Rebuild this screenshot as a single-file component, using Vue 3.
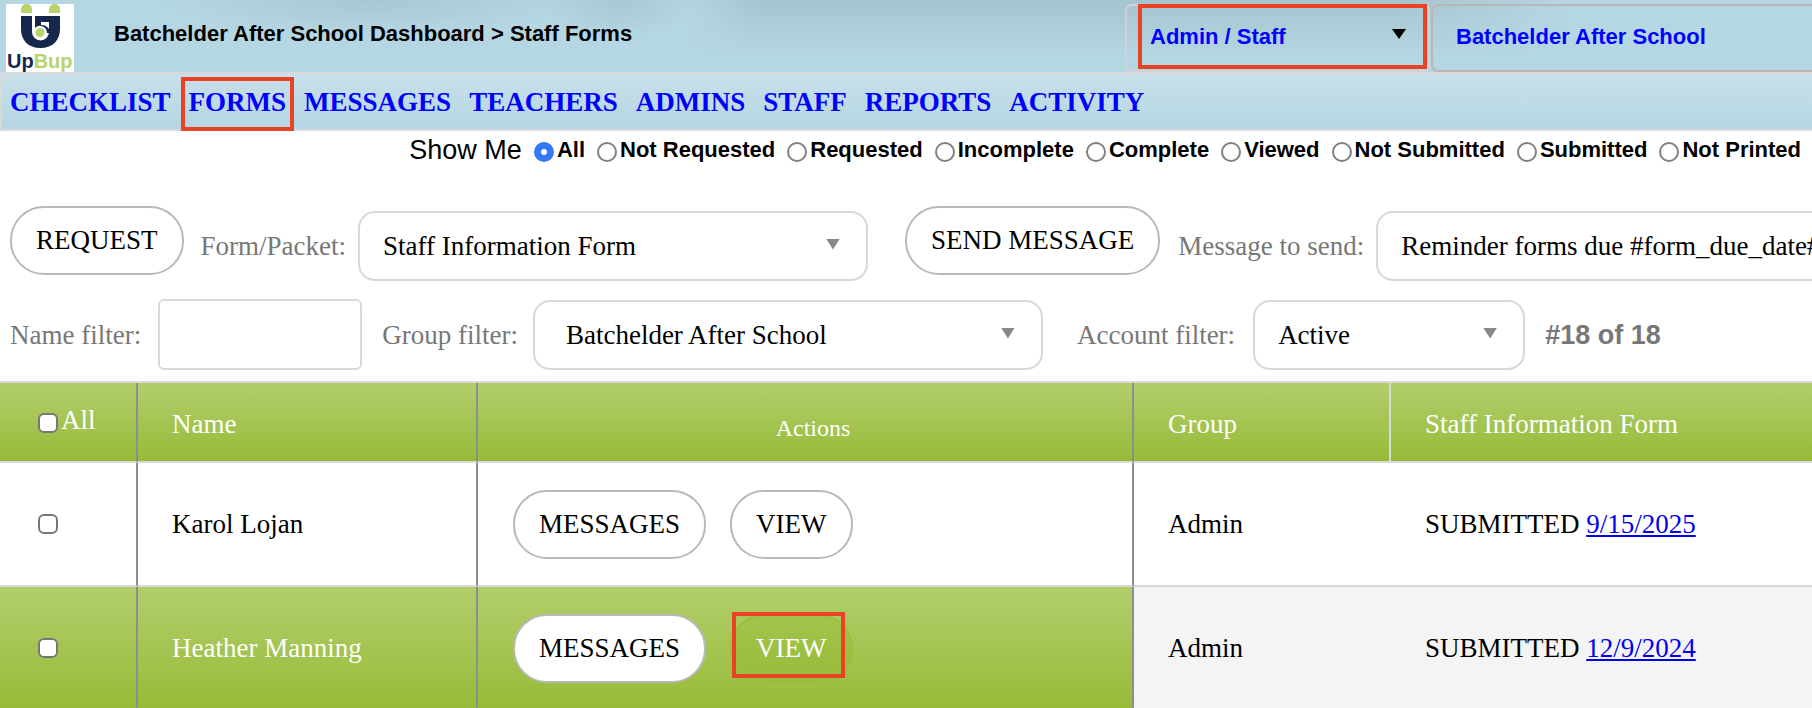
<template>
  <div class="page">
    <header class="topbar">
      <a class="logo" href="#" aria-label="UpBup">
        <svg viewBox="0 0 68 68" width="68" height="68" aria-hidden="true">
          <rect width="68" height="68" fill="#fff" />
          <path d="M15 9V5a5.500 5 0 0 1 11 0v4zM43 9V5a5.500 5 0 0 1 11 0v4z" fill="#b9d36c" />
          <path d="M15 12h11v16a8.500 8.500 0 0 0 17 0V12h11v13c0 11-7 19-19.500 19S15 36 15 25z" fill="#15284b" />
          <path d="M29 12h15v6h-9v3c5 0 9 3 9 8h-3a7 7 0 0 0-12-5z" fill="#15284b" />
          <circle cx="34" cy="28.500" r="4.500" fill="#b9d36c" />
          <text x="1" y="64" class="logo-text" fill="#15284b">Up<tspan fill="#b9d36c">Bup</tspan></text>
        </svg>
      </a>
      <h1 class="title">Batchelder After School Dashboard &gt; Staff Forms</h1>
      <div class="role-select marked">
        <select v-model="role" aria-label="Role">
          <option>Admin / Staff</option>
        </select>
      </div>
      <select v-model="school" class="school-select" aria-label="School">
        <option>Batchelder After School</option>
      </select>
    </header>

    <nav class="nav">
      <a v-for="item in navItems" :key="item" href="#" :class="{ marked: item === 'FORMS' }">{{ item }}</a>
    </nav>

    <fieldset class="show-me">
      <span class="show-title">Show Me</span>
      <label v-for="s in statuses" :key="s">
        <input v-model="status" type="radio" name="status" :value="s" />{{ s }}
      </label>
    </fieldset>

    <div class="toolbar">
      <button type="button" class="pill">REQUEST</button>
      <label for="packet" class="packet-label">Form/Packet:</label>
      <div class="select wide">
        <select id="packet" v-model="packet">
          <option>Staff Information Form</option>
        </select>
      </div>
      <button type="button" class="pill send">SEND MESSAGE</button>
      <label for="message" class="message-label">Message to send:</label>
      <div class="select wide">
        <select id="message" v-model="message">
          <option>Reminder forms due #form_due_date#</option>
        </select>
      </div>
    </div>

    <div class="toolbar filters">
      <label for="name">Name filter:</label>
      <input id="name" v-model="nameFilter" type="text" class="name-input" />
      <label for="group">Group filter:</label>
      <div class="select wide group">
        <select id="group" v-model="group">
          <option>Batchelder After School</option>
        </select>
      </div>
      <label for="account" class="account-label">Account filter:</label>
      <div class="select account">
        <select id="account" v-model="account">
          <option>Active</option>
        </select>
      </div>
      <strong class="count">#18 of 18</strong>
    </div>

    <table class="staff">
      <colgroup>
        <col class="col-check" />
        <col class="col-name" />
        <col class="col-actions" />
        <col class="col-group" />
        <col />
      </colgroup>
      <thead>
        <tr>
          <th class="line check"><label><input v-model="all" type="checkbox" />All</label></th>
          <th class="line">Name</th>
          <th class="line actions-head">Actions</th>
          <th class="line light">Group</th>
          <th>Staff Information Form</th>
        </tr>
      </thead>
      <tbody>
        <tr v-for="row in rows" :key="row.name" :class="{ active: row.active }">
          <td class="line check"><input v-model="row.checked" type="checkbox" :aria-label="row.name" /></td>
          <td class="line">{{ row.name }}</td>
          <td class="line">
            <div class="actions">
              <button type="button" class="pill">MESSAGES</button>
              <button type="button" class="pill view" :class="{ marked: row.active }">VIEW</button>
            </div>
          </td>
          <td class="plain">{{ row.group }}</td>
          <td class="plain">SUBMITTED <a href="#">{{ row.date }}</a></td>
        </tr>
      </tbody>
    </table>
  </div>
</template>

<script setup>
import { ref } from 'vue';

const navItems = ['CHECKLIST', 'FORMS', 'MESSAGES', 'TEACHERS', 'ADMINS', 'STAFF', 'REPORTS', 'ACTIVITY'];
const statuses = [
  'All', 'Not Requested', 'Requested', 'Incomplete', 'Complete',
  'Viewed', 'Not Submitted', 'Submitted', 'Not Printed',
];

const role = ref('Admin / Staff');
const school = ref('Batchelder After School');
const status = ref('All');
const packet = ref('Staff Information Form');
const message = ref('Reminder forms due #form_due_date#');
const nameFilter = ref('');
const group = ref('Batchelder After School');
const account = ref('Active');
const all = ref(false);

const rows = ref([
  { name: 'Karol Lojan', group: 'Admin', date: '9/15/2025', checked: false, active: false },
  { name: 'Heather Manning', group: 'Admin', date: '12/9/2024', checked: false, active: true },
]);
</script>

<style>
body { margin: 0; overflow: hidden; background: #fff; }
</style>

<style scoped>
.page { overflow: hidden; color: #000; font: 27px/32px "Liberation Serif", "Times New Roman", serif; white-space: nowrap; }
.page * { box-sizing: border-box; }
select, input, button { margin: 0; font: inherit; color: inherit; }
select { appearance: none; background: transparent; cursor: pointer; }

/* top bar */
.topbar {
  display: flex; height: 72px; padding-left: 6px;
  font: bold 22px/26px "Liberation Sans", Arial, sans-serif;
  background:
    radial-gradient(ellipse 220px 36px at 370px 0, #a8c7d2, transparent),
    radial-gradient(ellipse 80px 40px at 620px 0, #a8c7d2, transparent),
    linear-gradient(90deg, #b5d7e3 680px, transparent 760px, transparent 1400px, #b5d7e3 1580px),
    linear-gradient(#a6c4cf, #b5d7e3 60px);
}
.logo { flex: none; height: 68px; margin-top: 4px; }
.logo svg { display: block; }
.logo-text { font: bold 20px "Liberation Sans", Arial, sans-serif; }
.title { flex: 1; margin: 21px 0 0 40px; font: inherit; }
.role-select { position: relative; flex: none; width: 305px; height: 68px; margin: 4px 1px 0 0; }
.role-select select, .school-select { border: 2px solid #cfd3d5; border-radius: 7px; color: #00f; padding: 0 23px 2px; }
.role-select select { width: 100%; height: 100%; }
.role-select::before {
  content: ""; position: absolute; right: 24px; top: 25px; width: 14px; height: 10px;
  background: #000; clip-path: polygon(0 0, 100% 0, 50% 100%); pointer-events: none;
}
.school-select { flex: none; width: 381px; height: 68px; margin-top: 4px; border-color: #bbb5b8; border-right: 0; border-radius: 7px 0 0 7px; }

/* red frame around highlighted controls */
.marked { position: relative; }
.marked::after { content: ""; position: absolute; border: 4px solid #e94326; pointer-events: none; }
.role-select.marked::after { inset: 0 3px 3px 13px; }
.nav .marked::after { inset: -9px -8px -13px; }

/* navigation */
.nav {
  display: flex; gap: 18px; height: 59px; padding: 12px 8px 0; font-weight: bold;
  border: 2px solid #d9d9d9; border-right: 0; background: linear-gradient(#c9e0ea, #b4d6e2);
}
.nav a { height: 32px; color: #00f; text-decoration: none; }

/* status radios */
.show-me {
  display: flex; justify-content: flex-end; align-items: center; gap: 12px; height: 38px;
  margin: 0; padding: 0 11px 0 0; border: 0; font: bold 22px/26px "Liberation Sans", Arial, sans-serif;
}
.show-title { font-size: 27px; font-weight: normal; }
.show-me label { display: flex; align-items: center; gap: 3px; }
input[type="radio"] { appearance: none; width: 20px; height: 20px; margin-top: 4px; border: 2px solid #808080; border-radius: 50%; background: #fff; }
input[type="radio"]:checked { border: 7px solid #3478f6; }

/* toolbar */
.toolbar { display: flex; align-items: center; padding: 0 10px; color: #777; }
.toolbar > * { flex: none; }
.show-me + .toolbar { margin-top: 37px; }
.filters { margin: 18px 0 11px; }
.pill { height: 69px; padding: 0 24px; border: 2px solid #b9b9b9; border-radius: 34px; background: #fff; color: #000; cursor: pointer; }
.toolbar .pill { margin-bottom: 6px; padding-bottom: 2px; }
.packet-label { margin: 4px 12px 0 17px; }
.toolbar .send { margin-left: 37px; }
.message-label { margin: 4px 12px 0 18px; }
.select { position: relative; width: 272px; height: 70px; color: #000; }
.toolbar:not(.filters) .select { margin-top: 4px; }
.select.wide { width: 510px; }
.select select { width: 100%; height: 100%; padding: 0 23px; border: 2px solid #d9d9d9; border-radius: 17px; }
.select.group select { padding-left: 31px; }
.select::after {
  content: ""; position: absolute; right: 28px; top: 28px; width: 14px; height: 11px;
  background: #888; clip-path: polygon(0 0, 100% 0, 50% 100%); pointer-events: none;
}
.name-input { width: 204px; height: 71px; margin: 0 20px 0 17px; border: 2px solid #d9d9d9; border-radius: 6px; background: #fff; }
.select.group { margin-left: 15px; }
.account-label { margin: 0 18px 0 34px; }
.count { margin-left: 20px; font-family: "Liberation Sans", Arial, sans-serif; }

/* staff table */
.staff { width: 100%; table-layout: fixed; border-collapse: separate; border-spacing: 0; border-top: 2px solid #d9d9d9; }
.col-check { width: 138px; }
.col-name { width: 340px; }
.col-actions { width: 656px; }
.col-group { width: 257px; }
th, td { padding: 0 34px; border-bottom: 2px solid #d9d9d9; text-align: left; }
th { height: 80px; padding-top: 4px; font-weight: normal; }
td { height: 124px; }
.line { border-right: 2px solid #8e8e8e; }
.line.light { border-right-color: #d9d9d9; }
th, .active td { color: #fff; background: linear-gradient(#b2ce6c, #97bb38); background-clip: padding-box; }
.active .plain { color: #000; background: #f4f4f4; }
.check { padding: 0 0 0 38px; }
.check label { display: flex; align-items: center; gap: 3px; padding-bottom: 4px; }
input[type="checkbox"] { appearance: none; display: block; width: 20px; height: 20px; border: 2px solid #777; border-radius: 6px; background: #fff; }
.check label input { margin-top: 6px; }
.actions-head { padding-top: 12px; padding-right: 18px; font-size: 24px; text-align: center; }
.actions { display: flex; gap: 24px; padding-left: 1px; }
td a { color: #00e; }
.active .view { color: #fff; border-color: #9bbe42; background: linear-gradient(#a2c44c, #98bc3a); }
.view.marked::after { inset: -4px 6px 3px 0; }
</style>
